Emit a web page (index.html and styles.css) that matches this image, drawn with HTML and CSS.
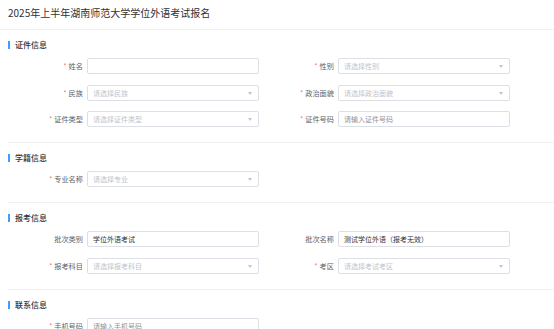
FILE: index.html
```html
<!DOCTYPE html>
<html lang="zh-CN">
<head>
<meta charset="utf-8">
<title>报名</title>
<link rel="stylesheet" href="styles.css">
</head>
<body>
<div class="page">
  <div class="title">2025年上半年湖南师范大学学位外语考试报名</div>
  <div class="content">
    <section class="section">
      <div class="sec-head">证件信息</div>
      <div class="grid">
        <div class="item"><label class="label req">姓名</label><div class="control"></div></div>
        <div class="item"><label class="label req">性别</label><div class="control select"><span class="ph">请选择性别</span><i class="arrow"></i></div></div>
        <div class="item"><label class="label req">民族</label><div class="control select"><span class="ph">请选择民族</span><i class="arrow"></i></div></div>
        <div class="item"><label class="label req">政治面貌</label><div class="control select"><span class="ph">请选择政治面貌</span><i class="arrow"></i></div></div>
        <div class="item"><label class="label req">证件类型</label><div class="control select"><span class="ph">请选择证件类型</span><i class="arrow"></i></div></div>
        <div class="item"><label class="label req">证件号码</label><div class="control"><span class="ph2">请输入证件号码</span></div></div>
      </div>
    </section>
    <section class="section">
      <div class="sec-head">学籍信息</div>
      <div class="grid">
        <div class="item"><label class="label req">专业名称</label><div class="control select"><span class="ph">请选择专业</span><i class="arrow"></i></div></div>
      </div>
    </section>
    <section class="section">
      <div class="sec-head">报考信息</div>
      <div class="grid">
        <div class="item"><label class="label">批次类别</label><div class="control"><span class="val">学位外语考试</span></div></div>
        <div class="item"><label class="label">批次名称</label><div class="control"><span class="val">测试学位外语（报考无效）</span></div></div>
        <div class="item"><label class="label req">报考科目</label><div class="control select"><span class="ph">请选择报考科目</span><i class="arrow"></i></div></div>
        <div class="item"><label class="label req">考区</label><div class="control select"><span class="ph">请选择考试考区</span><i class="arrow"></i></div></div>
      </div>
    </section>
    <section class="section">
      <div class="sec-head">联系信息</div>
      <div class="grid">
        <div class="item"><label class="label req">手机号码</label><div class="control"><span class="ph2">请输入手机号码</span></div></div>
      </div>
    </section>
  </div>
</div>
</body>
</html>
```

FILE: styles.css
```css
* { box-sizing: border-box; }
html, body { margin: 0; padding: 0; background: #fff; }
body {
  font-family: "Noto Sans CJK SC", "Noto Sans", sans-serif;
  color: #303133;
  overflow: hidden;
}
.title {
  height: 30px;
  padding: 6px 8px 0;
  font-size: 10px;
  line-height: 14px;
  color: #303133;
  border-bottom: 1px solid #f0f1f3;
}
.content { margin-left: 8px; }
.section {
  padding: 8px 0 15px;
  border-bottom: 1px solid #eef0f3;
}
.sec-head {
  height: 14px;
  line-height: 14px;
  font-size: 8px;
  font-weight: 500;
  color: #303133;
  padding-left: 7px;
  position: relative;
  margin-bottom: 6px;
}
.sec-head::before {
  content: "";
  position: absolute;
  left: 0;
  top: 3px;
  width: 2px;
  height: 8px;
  background: #409eff;
}
.grid {
  display: grid;
  grid-template-columns: 251px 252px;
  row-gap: 10.5px;
}
.item { display: flex; align-items: center; height: 16px; }
.label {
  width: 79px;
  flex: none;
  text-align: right;
  padding-right: 4px;
  font-size: 7.2px;
  color: #606266;
  line-height: 16px;
}
.label.req::before {
  content: "*";
  color: #f56c6c;
  margin-right: 2px;
}
.control {
  flex: 1;
  height: 16px;
  border: 1px solid #dcdfe6;
  border-radius: 2px;
  display: flex;
  align-items: center;
  padding: 0 5px;
  font-size: 7px;
  position: relative;
}
.item:nth-child(2n) .control { margin-right: 1px; }
.ph { color: #c0c4cc; }
.ph2 { color: #909399; }
.val { color: #303133; }
.arrow {
  position: absolute;
  right: 6px;
  top: 6px;
  width: 0;
  height: 0;
  border-left: 2.5px solid transparent;
  border-right: 2.5px solid transparent;
  border-top: 3px solid #c0c4cc;
}
```
